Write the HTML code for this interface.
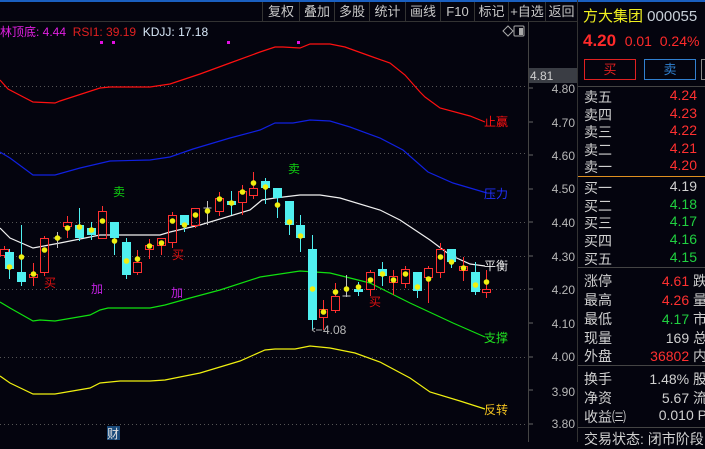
<!DOCTYPE html>
<html><head><meta charset="utf-8"><style>
*{margin:0;padding:0;box-sizing:border-box}
body{width:705px;height:442px;background:#04040e;overflow:hidden;position:relative;font-family:"Liberation Sans","Noto Sans CJK SC",sans-serif;color:#c8c8c8}
.t{position:absolute;white-space:nowrap}
.btn{position:absolute;top:2px;height:19px;font-size:13px;color:#c8c8c8;border-left:1px solid #333;text-align:center;line-height:19px}
.rp{position:absolute;left:577px;top:0;width:128px;height:442px;border-left:1px solid #333}
.row{position:absolute;left:6px;font-size:14px;color:#d0d0d0}
.v{position:absolute;font-size:14px;text-align:right}
</style></head><body>
<div style="position:absolute;left:0;top:0;width:705px;height:2px;background:#1a5fc0"></div>
<div style="position:absolute;left:0;top:21px;width:577px;height:1px;background:#333"></div>
<div class="btn" style="left:262px;width:37px">复权</div>
<div class="btn" style="left:299px;width:35px">叠加</div>
<div class="btn" style="left:334px;width:35px">多股</div>
<div class="btn" style="left:369px;width:36px">统计</div>
<div class="btn" style="left:405px;width:35px">画线</div>
<div class="btn" style="left:440px;width:34px">F10</div>
<div class="btn" style="left:474px;width:34px">标记</div>
<div class="btn" style="left:508px;width:37px">+自选</div>
<div class="btn" style="left:545px;width:32px">返回</div>
<div class="t" style="left:0;top:23px;font-size:12px"><span style="color:#e020e0">林顶底: 4.44</span>&nbsp; <span style="color:#e02020">RSI1: 39.19</span>&nbsp; <span style="color:#d8e8f8">KDJJ: 17.18</span></div>
<svg width="705" height="442" style="position:absolute;left:0;top:0" xmlns="http://www.w3.org/2000/svg">
<g stroke="#555" stroke-dasharray="1,3" stroke-width="1">
<line x1="0" y1="86.5" x2="528" y2="86.5"/><line x1="0" y1="153.5" x2="528" y2="153.5"/><line x1="0" y1="222.5" x2="528" y2="222.5"/><line x1="0" y1="256.5" x2="528" y2="256.5"/><line x1="0" y1="289.5" x2="528" y2="289.5"/><line x1="0" y1="357.5" x2="528" y2="357.5"/><line x1="0" y1="424.5" x2="528" y2="424.5"/>
</g>
<line x1="528.5" y1="22" x2="528.5" y2="442" stroke="#444"/>
<rect x="529" y="68" width="48" height="15" fill="#3a3d44"/>
<text x="530" y="80" font-size="12" fill="#d0d0d0" font-family="Liberation Sans">4.81</text>
<g font-size="12" fill="#b8b8b8" font-family="Liberation Sans" text-anchor="end">
<text x="575" y="93">4.80</text><text x="575" y="127">4.70</text><text x="575" y="160">4.60</text><text x="575" y="193">4.50</text><text x="575" y="227">4.40</text><text x="575" y="261">4.30</text><text x="575" y="294">4.20</text><text x="575" y="328">4.10</text><text x="575" y="361">4.00</text><text x="575" y="396">3.90</text><text x="575" y="428">3.80</text>
</g>
<g stroke="#666"><line x1="529" y1="88" x2="533" y2="88"/><line x1="529" y1="122" x2="533" y2="122"/><line x1="529" y1="155" x2="533" y2="155"/><line x1="529" y1="189" x2="533" y2="189"/><line x1="529" y1="222" x2="533" y2="222"/><line x1="529" y1="256" x2="533" y2="256"/><line x1="529" y1="289" x2="533" y2="289"/><line x1="529" y1="323" x2="533" y2="323"/><line x1="529" y1="357" x2="533" y2="357"/><line x1="529" y1="390" x2="533" y2="390"/><line x1="529" y1="424" x2="533" y2="424"/></g>
<path d="M503 31 l5 -5 5 5 -5 5z" fill="none" stroke="#aaa"/>
<rect x="514" y="26" width="10" height="10" rx="1" fill="none" stroke="#aaa"/><rect x="519" y="28" width="4" height="7" fill="#aaa"/>
<g fill="#e010e0"><rect x="100" y="41" width="3" height="3"/><rect x="112" y="41" width="3" height="3"/><rect x="227" y="41" width="3" height="3"/><rect x="297" y="41" width="3" height="3"/></g>
<g fill="none" stroke-width="1.2">
<polyline stroke="#ff1010" points="0,80 8,89 33,102 55,103 60,101 100,88 110,87 150,87 170,84 200,74 230,63 260,52 275,47 283,47 300,48 310,44 330,44 345,47 370,56 390,63 405,75 420,92 425,97 440,108 470,116 485,122"/>
<polyline stroke="#1020e0" points="0,152 10,158 33,175 55,175 80,168 110,161 150,160 170,157 193,149 230,138 260,130 275,123 293,123 310,120 330,121 350,127 380,138 403,150 428,172 453,183 487,193"/>
<polyline stroke="#f0f0f0" points="0,228 10,238 33,248 60,243 100,235 160,235 170,232 200,225 250,210 262,200 275,198 300,195 320,195 340,198 380,210 400,220 430,240 450,255 470,264 485,266"/>
<polyline stroke="#10e010" points="0,302 10,308 33,321 40,320 55,321 90,315 100,310 108,308 150,308 165,305 190,298 220,290 260,277 300,271 330,273 370,283 410,303 453,323 485,337"/>
<polyline stroke="#f0f010" points="0,376 10,383 33,394 55,394 90,388 100,383 120,381 150,381 165,380 200,373 240,361 265,350 275,349 295,349 310,346 330,348 355,353 380,362 410,378 430,392 460,401 485,409"/>
</g>
<g id="c"></g>
<text x="484" y="126" font-size="12" fill="#ff1010" font-family="Noto Sans CJK SC">止赢</text>
<text x="484" y="198" font-size="12" fill="#2030ff" font-family="Noto Sans CJK SC">压力</text>
<text x="484" y="270" font-size="12" fill="#f0f0f0" font-family="Noto Sans CJK SC">平衡</text>
<text x="484" y="342" font-size="12" fill="#20e020" font-family="Noto Sans CJK SC">支撑</text>
<text x="484" y="414" font-size="12" fill="#f0c020" font-family="Noto Sans CJK SC">反转</text>
<g font-size="12" font-family="Noto Sans CJK SC">
<text x="113" y="196" fill="#10d010">卖</text><text x="288" y="173" fill="#10d010">卖</text>
<text x="44" y="287" fill="#e01010">买</text><text x="172" y="259" fill="#e01010">买</text><text x="369" y="306" fill="#e01010">买</text>
<text x="91" y="293" fill="#c020e0">加</text><text x="171" y="297" fill="#c020e0">加</text>
</g>
<rect x="107" y="426" width="13" height="14" fill="#1a4a7a"/><text x="107" y="438" font-size="12" fill="#e0e0e0" font-family="Noto Sans CJK SC">财</text>
<path d="M316 330 h6 M312 330 l3 -2 M312 330 l3 2" stroke="#aaa" fill="none"/>
<text x="323" y="334" font-size="12" fill="#b8b8b8" font-family="Liberation Sans">4.08</text>
</svg>
<script>
var d=[[0,249,255,246,258,'r',0],[5,252,269,249,279,'c',267],[17,272,282,225,286,'c',257],[29,274,277,263,286,'r',274],[40,238,272,236,276,'r',250],[53,238,239,232,248,'g',238],[63,222,226,216,238,'r',228],[75,225,238,208,241,'c',227],[87,228,235,222,240,'c',230],[98,211,238,206,239,'r',221],[110,222,238,222,255,'c',241],[122,242,275,238,279,'c',261],[133,262,272,250,275,'r',259],[145,245,249,239,259,'r',246],[157,238,245,238,255,'r',243],[168,215,242,212,248,'r',221],[180,215,225,215,232,'c',225],[191,208,225,208,228,'r',215],[203,208,209,201,225,'g',211],[215,198,211,192,216,'r',199],[227,201,205,191,215,'c',203],[238,191,202,185,215,'r',192],[249,188,195,172,199,'r',183],[261,181,188,178,204,'c',187],[273,188,198,188,218,'c',205],[285,201,225,201,235,'c',222],[296,225,238,215,252,'c',236],[308,249,320,235,330,'c',289],[319,309,317,300,330,'r',312],[331,296,310,283,313,'r',292],[342,296,297,275,297,'g',289],[354,289,292,282,296,'c',287],[366,272,289,270,296,'r',280],[378,269,276,262,286,'c',274],[389,276,282,270,295,'r',280],[401,269,283,266,288,'r',274],[413,272,291,272,298,'c',287],[424,268,277,266,303,'r',279],[436,249,272,243,278,'r',257],[447,249,262,249,268,'c',262],[459,266,270,257,281,'r',268],[471,272,292,262,295,'c',285],[482,289,292,270,298,'r',282]];
var s='';d.forEach(function(a){var x=a[0],cx=x+4.5,col=a[5]=='r'?'#ff3030':a[5]=='c'?'#50f0f0':'#c0c0c0';
if(a[5]=='c'){s+='<line x1="'+cx+'" y1="'+a[3]+'" x2="'+cx+'" y2="'+a[4]+'" stroke="'+col+'"/><rect x="'+x+'" y="'+a[1]+'" width="9" height="'+Math.max(1,a[2]-a[1])+'" fill="'+col+'"/>';}
else if(a[5]=='g'){s+='<line x1="'+cx+'" y1="'+a[3]+'" x2="'+cx+'" y2="'+a[4]+'" stroke="'+col+'"/><line x1="'+(cx-4)+'" y1="'+a[1]+'" x2="'+(cx+4)+'" y2="'+a[1]+'" stroke="'+col+'"/>';}
else{s+='<line x1="'+cx+'" y1="'+a[3]+'" x2="'+cx+'" y2="'+a[1]+'" stroke="'+col+'"/><line x1="'+cx+'" y1="'+a[2]+'" x2="'+cx+'" y2="'+a[4]+'" stroke="'+col+'"/><rect x="'+(x+.5)+'" y="'+(a[1]+.5)+'" width="8" height="'+Math.max(1,a[2]-a[1])+'" fill="none" stroke="'+col+'"/>';}
if(a[6])s+='<circle cx="'+cx+'" cy="'+a[6]+'" r="2.8" fill="#f0f010"/>';});
document.getElementById('c').innerHTML=s;
</script>
<div class="rp">
<div class="t" style="left:5px;top:5px;font-size:15px;color:#f0f020">方大集团 <span style="color:#c8d0d8">000055</span></div>
<div class="t" style="left:5px;top:31px;font-size:17px;color:#ff2a2a;font-weight:bold">4.20 <span style="font-size:14px;font-weight:normal">&nbsp;0.01 &nbsp;0.24%</span></div>
<div style="position:absolute;left:6px;top:59px;width:52px;height:21px;border:1px solid #e02020;color:#e02020;text-align:center;font-size:13px;line-height:19px">买</div>
<div style="position:absolute;left:66px;top:59px;width:52px;height:21px;border:1px solid #3080d0;color:#3080d0;text-align:center;font-size:13px;line-height:19px">卖</div>
<div style="position:absolute;left:123px;top:59px;width:10px;height:21px;border:1px solid #888"></div>
<div style="position:absolute;left:0;top:86px;width:128px;height:1px;background:#444"></div>
<div style="position:absolute;left:0;top:176px;width:128px;height:1px;background:#e09020"></div>
<div style="position:absolute;left:0;top:267px;width:128px;height:1px;background:#444"></div>
<div style="position:absolute;left:0;top:365px;width:128px;height:1px;background:#444"></div>
<div style="position:absolute;left:0;top:427px;width:128px;height:1px;background:#444"></div>
<div class="row" style="top:87px">卖五</div><div class="v" style="right:8px;top:87px;color:#ff3030">4.24</div>
<div class="row" style="top:105px">卖四</div><div class="v" style="right:8px;top:105px;color:#ff3030">4.23</div>
<div class="row" style="top:122px">卖三</div><div class="v" style="right:8px;top:122px;color:#ff3030">4.22</div>
<div class="row" style="top:140px">卖二</div><div class="v" style="right:8px;top:140px;color:#ff3030">4.21</div>
<div class="row" style="top:157px">卖一</div><div class="v" style="right:8px;top:157px;color:#ff3030">4.20</div>
<div class="row" style="top:178px">买一</div><div class="v" style="right:8px;top:178px;color:#d0d0d0">4.19</div>
<div class="row" style="top:196px">买二</div><div class="v" style="right:8px;top:196px;color:#20d040">4.18</div>
<div class="row" style="top:213px">买三</div><div class="v" style="right:8px;top:213px;color:#20d040">4.17</div>
<div class="row" style="top:231px">买四</div><div class="v" style="right:8px;top:231px;color:#20d040">4.16</div>
<div class="row" style="top:249px">买五</div><div class="v" style="right:8px;top:249px;color:#20d040">4.15</div>
<div class="row" style="top:271px">涨停</div><div class="v" style="right:-2px;top:271px;color:#ff3030">4.61 <span style="color:#ccc">跌</span></div>
<div class="row" style="top:290px">最高</div><div class="v" style="right:-2px;top:290px;color:#ff3030">4.26 <span style="color:#ccc">量</span></div>
<div class="row" style="top:309px">最低</div><div class="v" style="right:-2px;top:309px;color:#20d040">4.17 <span style="color:#ccc">市</span></div>
<div class="row" style="top:328px">现量</div><div class="v" style="right:-2px;top:328px;color:#d0d0d0">169 <span style="color:#ccc">总</span></div>
<div class="row" style="top:346px">外盘</div><div class="v" style="right:-2px;top:346px;color:#ff3030">36802 <span style="color:#ccc">内</span></div>
<div class="row" style="top:369px">换手</div><div class="v" style="right:-2px;top:369px;color:#d0d0d0">1.48% <span>股</span></div>
<div class="row" style="top:388px">净资</div><div class="v" style="right:-2px;top:388px;color:#d0d0d0">5.67 <span>流</span></div>
<div class="row" style="top:407px">收益㈢</div><div class="v" style="right:-2px;top:407px;color:#d0d0d0">0.010 <span>P</span></div>
<div class="row" style="top:429px">交易状态: 闭市阶段</div>
</div>
</body></html>
